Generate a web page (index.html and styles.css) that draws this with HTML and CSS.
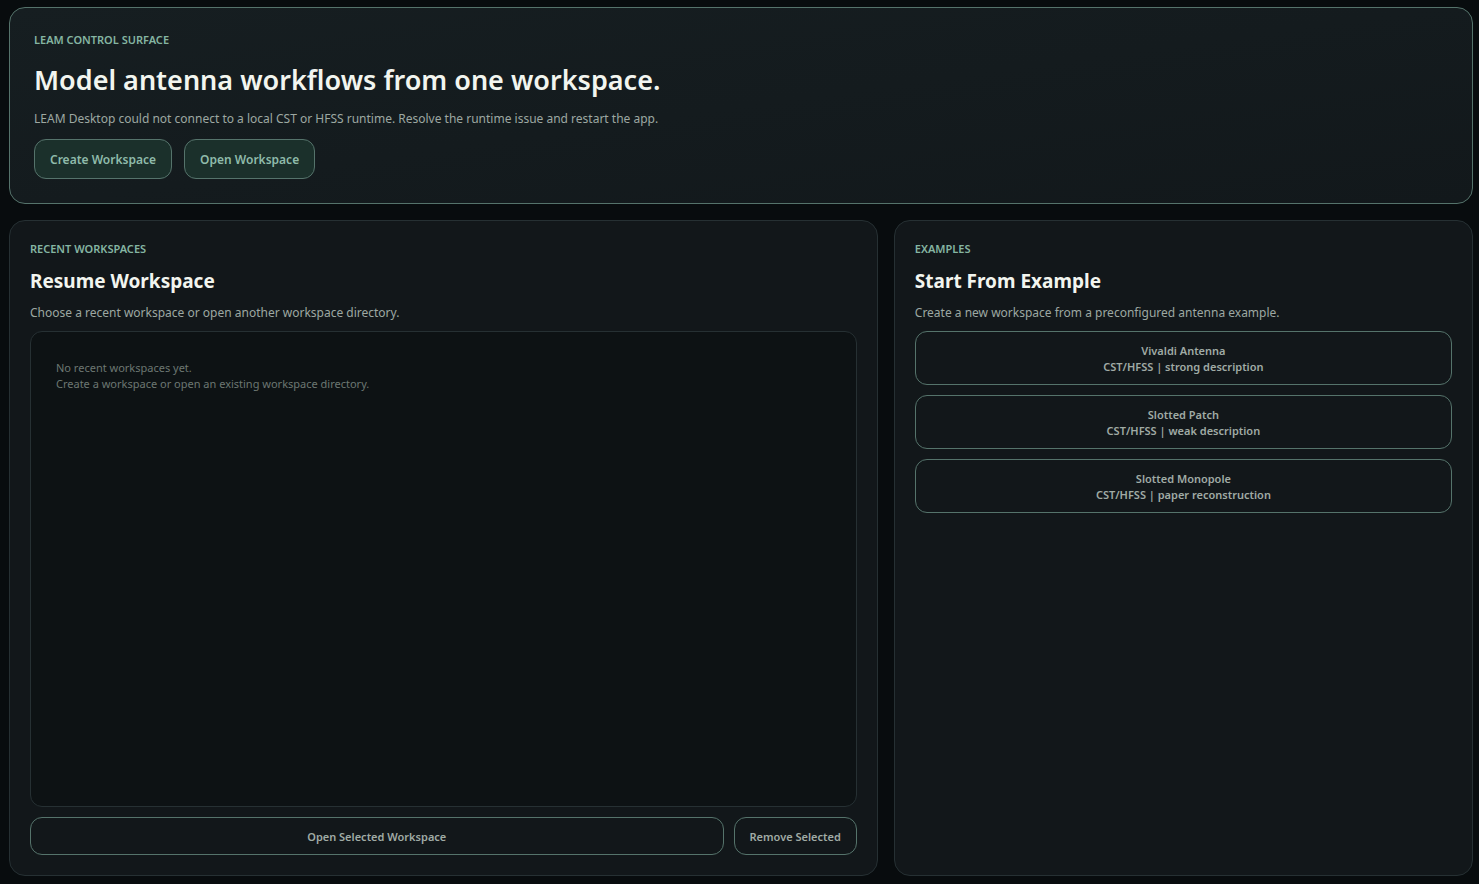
FILE: index.html
```html
<!DOCTYPE html>
<html lang="en">
<head>
<meta charset="utf-8">
<title>LEAM Desktop</title>
<link rel="stylesheet" href="styles.css">
</head>
<body>
<main class="page">
  <header class="hero">
    <p class="eyebrow">LEAM CONTROL SURFACE</p>
    <h1 class="hero-title">Model antenna workflows from one workspace.</h1>
    <p class="lead">LEAM Desktop could not connect to a local CST or HFSS runtime. Resolve the runtime issue and restart the app.</p>
    <div class="hero-actions">
      <button class="btn btn-primary" type="button">Create Workspace</button>
      <button class="btn btn-primary" type="button">Open Workspace</button>
    </div>
  </header>
  <div class="columns">
    <section class="panel">
      <p class="eyebrow">RECENT WORKSPACES</p>
      <h2 class="panel-title">Resume Workspace</h2>
      <p class="lead">Choose a recent workspace or open another workspace directory.</p>
      <div class="recent-list">
        <p class="empty">No recent workspaces yet.<br>Create a workspace or open an existing workspace directory.</p>
      </div>
      <div class="panel-actions">
        <button class="btn btn-grow" type="button">Open Selected Workspace</button>
        <button class="btn" type="button">Remove Selected</button>
      </div>
    </section>
    <section class="panel">
      <p class="eyebrow">EXAMPLES</p>
      <h2 class="panel-title">Start From Example</h2>
      <p class="lead">Create a new workspace from a preconfigured antenna example.</p>
      <div class="examples">
        <button class="btn" type="button">Vivaldi Antenna<br>CST/HFSS | strong description</button>
        <button class="btn" type="button">Slotted Patch<br>CST/HFSS | weak description</button>
        <button class="btn" type="button">Slotted Monopole<br>CST/HFSS | paper reconstruction</button>
      </div>
    </section>
  </div>
</main>
</body>
</html>
```
FILE: styles.css
```css
* {
  box-sizing: border-box;
}

body {
  margin: 0;
  background: #080c0e;
  color: #9da8a2;
  font-family: "Segoe UI", "Noto Sans", "Open Sans", sans-serif;
  font-size: 12px;
}

h1, h2, p {
  margin: 0;
}

.page {
  display: flex;
  flex-direction: column;
  gap: 16px;
  min-height: 100vh;
  padding: 7px 6px 8px 9px;
}

.hero {
  padding: 24px;
  border: 1px solid #55736b;
  border-radius: 16px;
  background: linear-gradient(172deg, #161e21, #12181b);
}

.eyebrow {
  margin-bottom: 10px;
  color: #85b5a2;
  font-size: 11px;
  font-weight: 600;
  line-height: 16px;
}

.hero-title {
  margin-bottom: 9px;
  color: #f2f5ef;
  font-size: 27px;
  font-weight: 600;
  line-height: 43px;
}

.panel-title {
  margin-bottom: 9px;
  color: #f2f5ef;
  font-size: 19px;
  font-weight: 700;
  line-height: 28px;
}

.lead {
  margin-bottom: 9px;
  font-size: 12px;
  line-height: 18px;
}

.hero .lead {
  margin-bottom: 11px;
}

.hero-actions {
  display: flex;
  flex-wrap: wrap;
  gap: 12px;
}

.columns {
  display: grid;
  flex: 1;
  grid-template-columns: 3fr 2fr;
  gap: 16px;
}

.panel {
  display: flex;
  flex-direction: column;
  min-width: 0;
  padding: 20px;
  border: 1px solid #263033;
  border-radius: 16px;
  background: #12171a;
}

.recent-list {
  flex: 1;
  padding: 28px 25px;
  border: 1px solid #263033;
  border-radius: 12px;
  background: #0d1214;
}

.empty {
  color: #6c7772;
  font-size: 11px;
  line-height: 16px;
}

.panel-actions {
  display: flex;
  gap: 10px;
  margin-top: 10px;
}

.examples {
  display: grid;
  gap: 10px;
}

.btn {
  padding: 11px 15px 9px;
  border: 1px solid #55736b;
  border-radius: 12px;
  background: transparent;
  color: #a0aba5;
  font-family: inherit;
  font-size: 11px;
  font-weight: 600;
  line-height: 16px;
  cursor: pointer;
}

.btn-primary {
  background: #1b302b;
  color: #8fbbaa;
  font-size: 12px;
  line-height: 18px;
}

.btn-grow {
  flex: 1;
}
```
